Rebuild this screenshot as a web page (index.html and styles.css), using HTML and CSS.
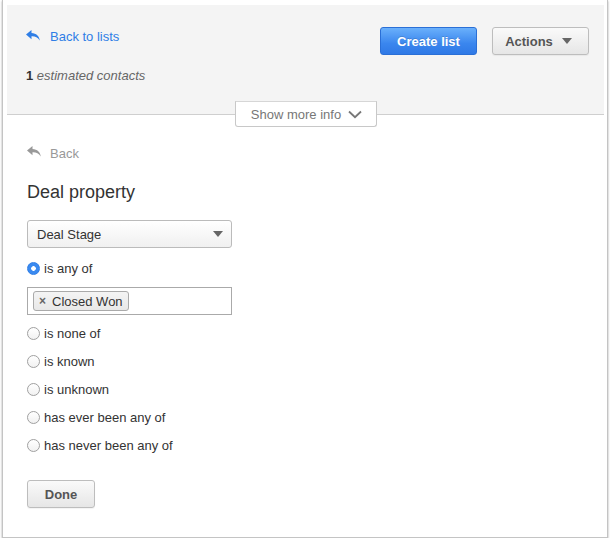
FILE: index.html
```html
<!DOCTYPE html>
<html>
<head>
<meta charset="utf-8">
<link rel="stylesheet" href="styles.css">
</head>
<body>
<div class="frame">
  <div class="header">
    <div class="header-top">
      <a class="back-lists" href="#">
        <svg class="reply" width="14" height="11" viewBox="0 0 14 11"><path d="M5.5 0 L0 4.6 L5.5 9.2 V6.3 C9 6.1 11.6 7.3 13.8 10.4 C13.2 6.2 10.4 3.2 5.5 3 Z" fill="#2f7ee6"/></svg>
        <span>Back to lists</span>
      </a>
      <div class="actions">
        <button class="btn btn-primary">Create list</button>
        <button class="btn btn-default">Actions <span class="caret"></span></button>
      </div>
    </div>
    <div class="estimate"><b>1</b> <i>estimated contacts</i></div>
    <button class="more-info">Show more info
      <svg width="14" height="9" viewBox="0 0 14 9"><path d="M1 1.5 L7 7.2 L13 1.5" fill="none" stroke="#777" stroke-width="1.8"/></svg>
    </button>
  </div>
  <div class="content">
    <a class="back" href="#">
      <svg class="reply" width="14" height="11" viewBox="0 0 14 11"><path d="M5.5 0 L0 4.6 L5.5 9.2 V6.3 C9 6.1 11.6 7.3 13.8 10.4 C13.2 6.2 10.4 3.2 5.5 3 Z" fill="#999"/></svg>
      <span>Back</span>
    </a>
    <h2 class="title">Deal property</h2>
    <div class="select">Deal Stage <span class="caret"></span></div>
    <label class="radio-row"><span class="radio checked"></span>is any of</label>
    <div class="tag-input"><span class="tag"><span class="x">×</span>Closed Won</span></div>
    <label class="radio-row"><span class="radio"></span>is none of</label>
    <label class="radio-row"><span class="radio"></span>is known</label>
    <label class="radio-row"><span class="radio"></span>is unknown</label>
    <label class="radio-row"><span class="radio"></span>has ever been any of</label>
    <label class="radio-row"><span class="radio"></span>has never been any of</label>
    <button class="btn btn-default done">Done</button>
  </div>
</div>
</body>
</html>
```

FILE: styles.css
```css
* { box-sizing: border-box; }
body {
  margin: 0;
  background: #fff;
  font-family: "Liberation Sans", Arial, sans-serif;
  font-size: 13px;
  color: #333;
}
.frame {
  margin-left: 2px;
  width: 606px;
  height: 538px;
  border: 1px solid #c4c4c4;
  border-top: none;
  box-shadow: 0 1px 2px rgba(0,0,0,0.35);
  padding: 5px 3px 0 4px;
}
.header {
  position: relative;
  background: #f4f4f4;
  border-bottom: 1px solid #cfcfcf;
  height: 110px;
  padding: 22px 15px 0 19px;
}
.header-top {
  display: flex;
  justify-content: space-between;
  align-items: flex-start;
}
.back-lists {
  display: flex;
  align-items: center;
  gap: 10px;
  color: #2f7ee6;
  text-decoration: none;
  font-size: 13px;
  margin-top: 2px;
}
.back-lists .reply { margin-top: -3px; }
.actions {
  display: flex;
  gap: 15px;
}
.btn {
  font-family: "Liberation Sans", Arial, sans-serif;
  font-weight: bold;
  font-size: 13px;
  height: 28px;
  border-radius: 3px;
  padding: 0 10px;
  cursor: pointer;
}
.btn-primary {
  width: 97px;
  color: #fff;
  border: 1px solid #2a6fd6;
  background: linear-gradient(#6ab0fb, #3a86ee 60%, #2f79e6);
  text-shadow: 0 -1px 0 rgba(0,0,0,0.15);
}
.btn-default {
  color: #555;
  border: 1px solid #bdbdbd;
  background: linear-gradient(#fafafa, #e6e6e6);
  box-shadow: 0 1px 1px rgba(0,0,0,0.05);
}
.actions .btn-default {
  width: 97px;
  display: flex;
  align-items: center;
  justify-content: center;
  gap: 9px;
  padding-left: 6px;
}
.caret {
  display: inline-block;
  width: 0;
  height: 0;
  border-left: 5px solid transparent;
  border-right: 5px solid transparent;
  border-top: 6px solid #666;
}
.estimate {
  margin-top: 13px;
  color: #666;
}
.estimate b { color: #333; }
.more-info {
  position: absolute;
  left: 50%;
  bottom: -13px;
  transform: translateX(-50%);
  width: 142px;
  height: 26px;
  background: #fff;
  border: 1px solid #c8c8c8;
  border-top-color: #d6d6d6;
  border-radius: 0 0 3px 3px;
  font-family: "Liberation Sans", Arial, sans-serif;
  font-size: 13px;
  color: #777;
  display: flex;
  align-items: center;
  justify-content: center;
  gap: 7px;
  padding: 0 0 0 2px;
}
.content {
  padding: 31px 20px 0 20px;
}
.back {
  display: flex;
  align-items: center;
  gap: 9px;
  color: #999;
  text-decoration: none;
  font-size: 13px;
}
.back .reply { margin-top: -4px; }
.title {
  font-size: 18px;
  font-weight: normal;
  color: #333;
  margin: 20px 0 0 0;
  line-height: 22px;
}
.select {
  margin-top: 17px;
  width: 205px;
  height: 28px;
  border: 1px solid #bbb;
  border-radius: 3px;
  background: linear-gradient(#fff, #f0f0f0);
  display: flex;
  align-items: center;
  justify-content: space-between;
  padding: 0 8px 0 9px;
  color: #333;
}
.radio-row {
  display: flex;
  align-items: center;
  gap: 4px;
  height: 16px;
  margin-top: 12px;
  color: #333;
}
.radio {
  width: 13px;
  height: 13px;
  border-radius: 50%;
  border: 1px solid #a0a0a0;
  background: linear-gradient(#fff, #f1f1f1);
  flex: none;
}
.radio.checked {
  border-color: #2f7ee6;
  background: radial-gradient(circle, #fff 0 2px, #3a8af0 2.6px);
}
.tag-input {
  margin-top: 11px;
  width: 205px;
  height: 28px;
  border: 1px solid #aaa;
  background: #fff;
  padding: 3px 5px;
  display: flex;
  align-items: center;
}
.tag {
  display: flex;
  align-items: center;
  height: 20px;
  padding: 0 5px 0 5px;
  border: 1px solid #aaa;
  border-radius: 3px;
  background: linear-gradient(#f4f4f4, #e8e8e8);
  color: #333;
}
.tag .x {
  color: #666;
  font-weight: bold;
  font-size: 12px;
  margin-right: 6px;
}
.tag-input + .radio-row { margin-top: 10px; }
.done {
  margin-top: 27px;
  width: 68px;
  height: 28px;
}
```
